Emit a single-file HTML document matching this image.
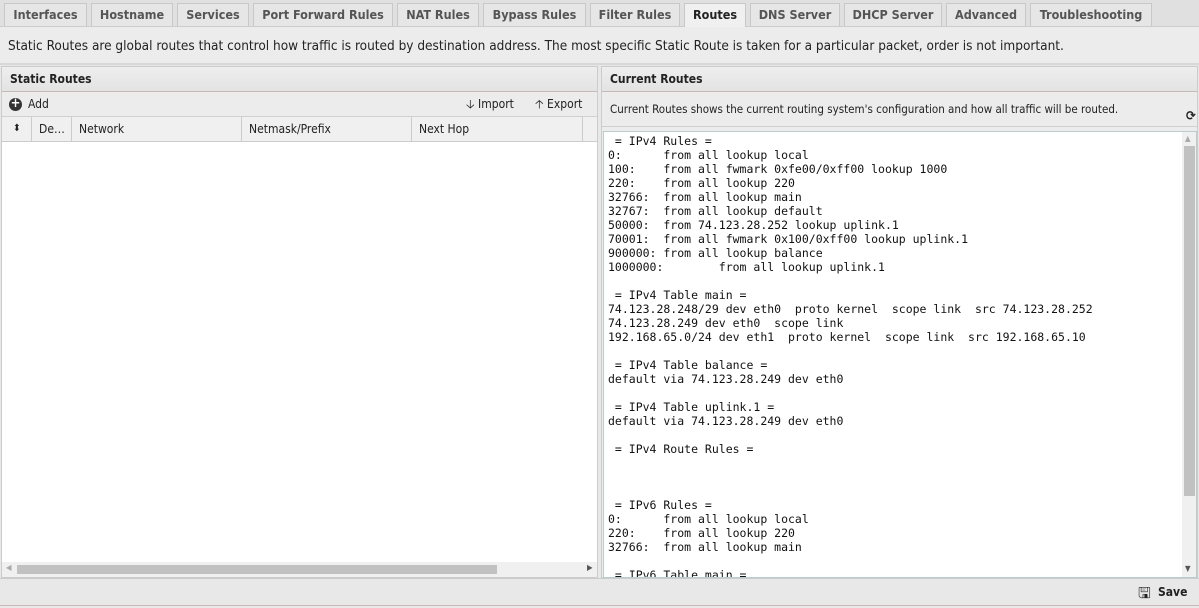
<!DOCTYPE html>
<html><head><style>
*{box-sizing:border-box;margin:0;padding:0}
body{width:1199px;height:606px;overflow:hidden;background:#e8e8e8;font-family:"DejaVu Sans Condensed","DejaVu Sans","Liberation Sans",sans-serif;font-size:12px;color:#222;position:relative}
.abs{position:absolute}
.tabs{left:0;top:0;width:1199px;height:27px;background:#e0e0e0;border-bottom:1px solid #ccc}
.tab{position:absolute;top:3px;height:23px;background:#e6e6e6;border:1px solid #c8c8c8;border-bottom:none;font-weight:bold;color:#555;font-size:12.5px;line-height:21px;text-align:center}
.tab.on{background:#f0f0f0;color:#222;height:24px}
.desc{left:0;top:27px;width:1199px;height:38px;background:#ececec;font-size:13.5px;line-height:38px;padding-left:8px;color:#222;border-bottom:2px solid #d8d8d8}
.panel{background:#fff;border:1px solid #ccc}
.hdr{height:25px;background:linear-gradient(#eee,#e3e3e3);border-bottom:1px solid #c8b8b8;font-weight:bold;line-height:24px;padding-left:8px;font-size:12px}
.mono{font-family:"DejaVu Sans Mono","Liberation Mono",monospace;font-size:11.5px;line-height:14px;white-space:pre;color:#111}
</style></head><body>
<div class="abs tabs">
<div class="tab" style="left:4px;width:83px">Interfaces</div>
<div class="tab" style="left:91px;width:82px">Hostname</div>
<div class="tab" style="left:177px;width:72px">Services</div>
<div class="tab" style="left:253px;width:140px">Port Forward Rules</div>
<div class="tab" style="left:397px;width:82px">NAT Rules</div>
<div class="tab" style="left:483px;width:103px">Bypass Rules</div>
<div class="tab" style="left:590px;width:90px">Filter Rules</div>
<div class="tab on" style="left:684px;width:62px">Routes</div>
<div class="tab" style="left:750px;width:90px">DNS Server</div>
<div class="tab" style="left:844px;width:98px">DHCP Server</div>
<div class="tab" style="left:946px;width:80px">Advanced</div>
<div class="tab" style="left:1030px;width:122px">Troubleshooting</div>
</div>
<div class="abs desc">Static Routes are global routes that control how traffic is routed by destination address. The most specific Static Route is taken for a particular packet, order is not important.</div>

<div class="abs panel" style="left:1px;top:66px;width:597px;height:512px">
<div class="hdr">Static Routes</div>
<div style="height:25px;background:#ececec;border-bottom:1px solid #d0d0d0;position:relative;line-height:24px">
<span class="abs" style="left:7px;top:6px;width:13px;height:13px;border-radius:50%;background:#333;color:#fff;font-size:13px;line-height:12px;text-align:center;font-weight:bold">+</span>
<span class="abs" style="left:26px">Add</span>
<span class="abs" style="left:464px">🡣 Import</span>
<span class="abs" style="left:533px">🡡 Export</span>
</div>
<div style="height:25px;background:#f0f0f0;border-bottom:1px solid #ccc;position:relative;line-height:24px">
<span class="abs" style="left:11px;font-size:10px">⬍</span>
<div class="abs" style="left:29px;top:0;height:24px;border-left:1px solid #ccc;padding-left:7px">De…</div>
<div class="abs" style="left:69px;top:0;height:24px;border-left:1px solid #ccc;padding-left:7px">Network</div>
<div class="abs" style="left:239px;top:0;height:24px;border-left:1px solid #ccc;padding-left:7px">Netmask/Prefix</div>
<div class="abs" style="left:409px;top:0;height:24px;border-left:1px solid #ccc;padding-left:7px">Next Hop</div>
<div class="abs" style="left:580px;top:0;height:24px;border-left:1px solid #ccc"></div>
</div>
<div class="abs" style="left:0;top:495px;width:595px;height:15px;background:#f0f0f0">
<div class="abs" style="left:15px;top:3px;width:480px;height:9px;background:#c1c1c1"></div>
<span class="abs" style="left:4px;top:1px;font-size:8px;color:#aaa">◀</span>
<span class="abs" style="left:585px;top:1px;font-size:8px;color:#555">▶</span>
</div>
</div>

<div class="abs panel" style="left:601px;top:66px;width:597px;height:512px;background:#ececec">
<div class="hdr">Current Routes</div>
<div style="height:35px;line-height:34px;padding-left:8px;font-size:11.5px;border-bottom:1px solid #d0d0d0">Current Routes shows the current routing system's configuration and how all traffic will be routed.<span class="abs" style="left:584px;top:33px;font-weight:bold;font-size:13px">⟳</span></div>
<div class="abs" style="left:1px;top:64px;width:594px;height:447px;background:#fff;border:1px solid #bcc;overflow:hidden">
<div class="mono" style="padding:2px 0 0 4px"> = IPv4 Rules =
0:      from all lookup local
100:    from all fwmark 0xfe00/0xff00 lookup 1000
220:    from all lookup 220
32766:  from all lookup main
32767:  from all lookup default
50000:  from 74.123.28.252 lookup uplink.1
70001:  from all fwmark 0x100/0xff00 lookup uplink.1
900000: from all lookup balance
1000000:        from all lookup uplink.1

 = IPv4 Table main =
74.123.28.248/29 dev eth0  proto kernel  scope link  src 74.123.28.252
74.123.28.249 dev eth0  scope link
192.168.65.0/24 dev eth1  proto kernel  scope link  src 192.168.65.10

 = IPv4 Table balance =
default via 74.123.28.249 dev eth0

 = IPv4 Table uplink.1 =
default via 74.123.28.249 dev eth0

 = IPv4 Route Rules =



 = IPv6 Rules =
0:      from all lookup local
220:    from all lookup 220
32766:  from all lookup main

 = IPv6 Table main =</div>
<div class="abs" style="left:578px;top:0;width:15px;height:445px;background:#f0f0f0">
<span class="abs" style="left:3px;top:2px;font-size:8px;color:#aaa">▲</span>
<div class="abs" style="left:2px;top:14px;width:11px;height:350px;background:#c1c1c1"></div>
<span class="abs" style="left:3px;top:432px;font-size:8px;color:#555">▼</span>
</div>
</div>
</div>

<div class="abs" style="left:0;top:578px;width:1199px;height:28px;background:#e8e8e8;border-top:1px solid #ccc;border-bottom:1px solid #c8b8b8">
<span class="abs" style="left:1138px;top:4px;font-size:15px">🖫</span>
<span class="abs" style="left:1158px;top:6px;font-weight:bold;font-size:12px">Save</span>
</div>
</body></html>
